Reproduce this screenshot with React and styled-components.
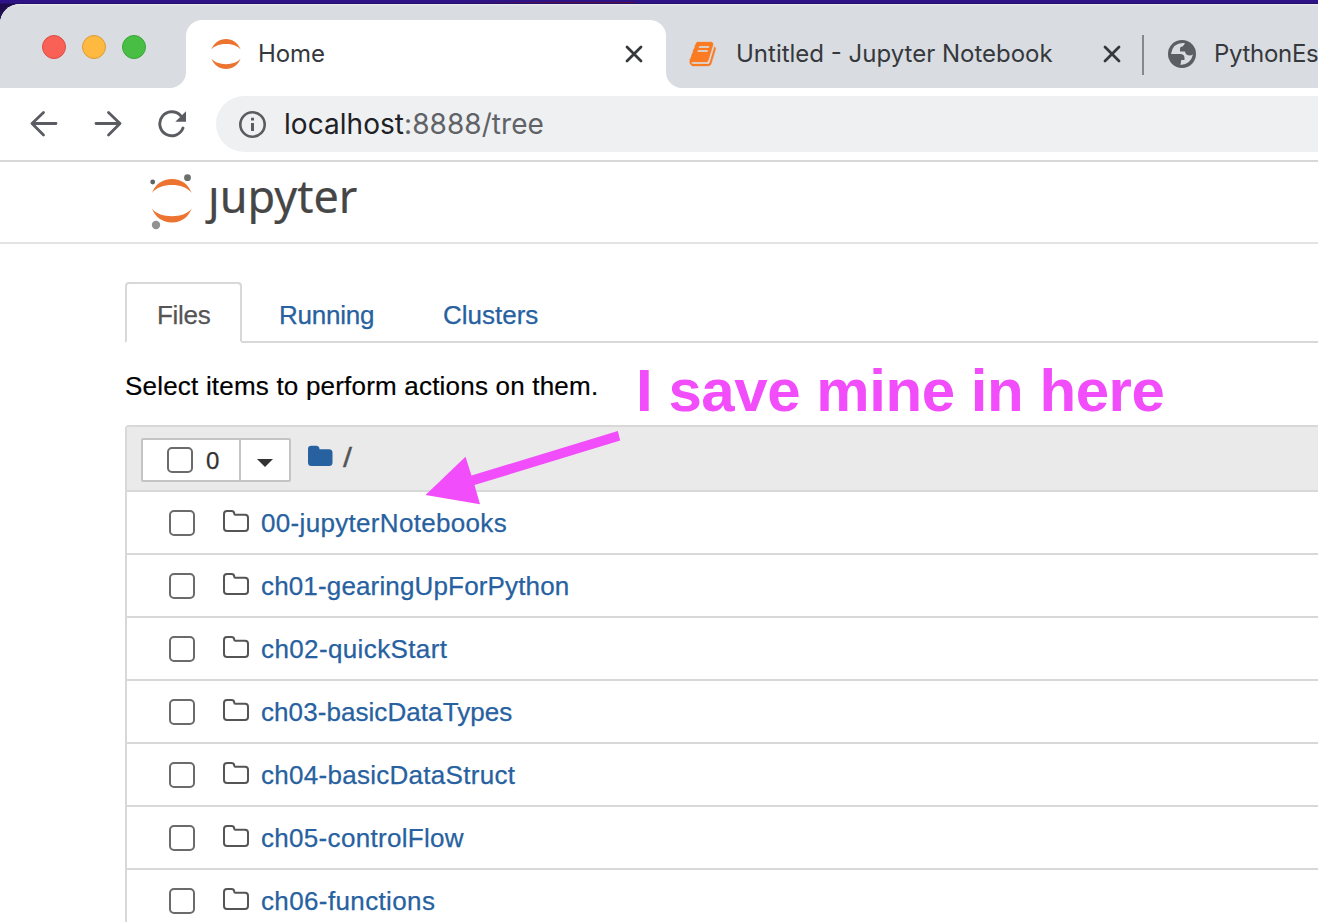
import React from "react";
import styled, { createGlobalStyle } from "styled-components";

const helvetica = '"Liberation Sans", Arial, sans-serif';
const ui = 'Inter, "Liberation Sans", sans-serif';

const GlobalStyle = createGlobalStyle`
  * { box-sizing: border-box; }
  html, body { margin: 0; padding: 0; overflow: hidden; }
  svg { flex: none; }
`;

const Desktop = styled.div`
  position: relative;
  width: 1318px;
  height: 922px;
  padding-top: 4px;
  overflow: hidden;
  background:
    linear-gradient(90deg, transparent 460px, #5a0d45 560px 634px, transparent 636px) 0 2px / 100% 1px no-repeat,
    linear-gradient(#2d1385 0 3px, #1c0b4e 4px, #2b1352 30px);
`;

const Window = styled.div`
  height: 918px;
  display: flex;
  flex-direction: column;
  background: #fff;
  border-top-left-radius: 20px;
  overflow: hidden;
`;

const TabStrip = styled.div`
  height: 84px;
  flex: none;
  display: flex;
`;

const LeftShoulder = styled.div`
  flex: none;
  background: linear-gradient(#d9dce1 50%, #fff 50%);
`;

const WindowControls = styled.div`
  width: 186px;
  height: 84px;
  display: flex;
  gap: 16px;
  padding: 31px 0 0 42px;
  border-bottom-right-radius: 16px;
  background: linear-gradient(#eceef0 0, #d9dce1 2px);
`;

const Light = styled.span`
  width: 24px;
  height: 24px;
  border-radius: 50%;
  background: ${(p) => p.$fill};
  border: 1px solid ${(p) => p.$edge};
`;

const ActiveTabSlot = styled.div`
  width: 480px;
  height: 84px;
  flex: none;
  padding-top: 16px;
  background: linear-gradient(#eceef0 0, #d9dce1 2px);
`;

const ActiveTab = styled.div`
  height: 68px;
  display: flex;
  align-items: center;
  padding: 0 24px;
  border-radius: 16px 16px 0 0;
  background: #fff;
`;

const RightShoulder = styled.div`
  flex: 1;
  min-width: 0;
  background: linear-gradient(#d9dce1 50%, #fff 50%);
`;

const IdleTabs = styled.div`
  height: 84px;
  display: flex;
  align-items: center;
  padding: 16px 0 0 23px;
  border-bottom-left-radius: 16px;
  background: linear-gradient(#eceef0 0, #d9dce1 2px);
  overflow: hidden;
`;

const TabTitle = styled.span`
  font: 24px/32px ${ui};
  letter-spacing: ${(p) => p.$track}px;
  color: #35383c;
  white-space: nowrap;
  width: ${(p) => (p.$width ? p.$width + "px" : "auto")};
  margin: 0 0 0 ${(p) => p.$gap}px;
  flex: none;
`;

const TabDivider = styled.span`
  width: 2px;
  height: 40px;
  margin: 1px 24px 0 21px;
  background: #85888c;
  flex: none;
`;

const Toolbar = styled.div`
  height: 74px;
  flex: none;
  display: flex;
  align-items: center;
  border-bottom: 2px solid #d7d8d9;
  padding-left: 30px;
`;

const NavButtons = styled.div`
  width: 186px;
  display: flex;
  align-items: center;
  gap: 36px;
`;

const AddressBar = styled.div`
  flex: 1;
  height: 56px;
  display: flex;
  align-items: center;
  gap: 18px;
  padding-left: 23px;
  border-radius: 28px 0 0 28px;
  background: #eff0f2;
`;

const Url = styled.span`
  font: 28px/36px ${ui};
  letter-spacing: ${(p) => p.$track}px;
  color: #5f6266;
  b { font-weight: 400; color: #202124; }
`;

const Header = styled.header`
  height: 82px;
  flex: none;
  display: flex;
  align-items: flex-start;
  padding: 12px 0 0 149px;
  border-bottom: 2px solid #e3e3e3;
`;

const Wordmark = styled.span`
  font: 45px/50px "Noto Sans", "Open Sans", sans-serif;
  -webkit-text-stroke: 0.2px #464646;
  color: #464646;
  margin: -3px 0 0 15px;
`;

const DotlessJ = styled.span`
  display: inline-block;
  clip-path: inset(17px -10px -10px -10px);
`;

const Main = styled.main`
  padding: 38px 0 0 125px;
`;

const NavTabs = styled.nav`
  display: flex;
  height: 61px;
  border-bottom: 2px solid #d8d8d8;
`;

const NavTab = styled.a`
  height: 61px;
  width: ${(p) => p.$width}px;
  padding: 15px 0 0 30px;
  font: 26px/32px ${helvetica};
  letter-spacing: ${(p) => p.$track || 0}px;
  color: ${(p) => (p.$active ? "#555" : "#2761a0")};
  -webkit-text-stroke: 0.25px currentColor;
  border: 2px solid ${(p) => (p.$active ? "#d8d8d8" : "transparent")};
  border-bottom: ${(p) => (p.$active ? "2px solid #fff" : "0")};
  border-radius: 4px 4px 0 0;
  margin-right: 5px;
`;

const Hint = styled.p`
  margin: 27px 0 23px;
  font: 26px/32px ${helvetica};
  letter-spacing: ${(p) => p.$track}px;
  color: #000;
  -webkit-text-stroke: 0.2px currentColor;
  white-space: nowrap;
`;

const FileList = styled.section`
  border: 2px solid #d8d8d8;
  border-width: 2px 0 0 2px;
  border-top-left-radius: 4px;
`;

const ListHeader = styled.div`
  height: 65px;
  display: flex;
  background: #eaeaea;
  border-bottom: 2px solid #d8d8d8;
  padding: 11px 0 0 14px;
`;

const ButtonGroup = styled.div`
  display: flex;
  width: 150px;
  height: 44px;
  background: #fff;
  border: 2px solid #c4c4c4;
  border-radius: 2px;
`;

const SelectAll = styled.div`
  width: 98px;
  display: flex;
  align-items: center;
  gap: 13px;
  padding-left: 24px;
  border-right: 2px solid #c4c4c4;
  font: 24px/32px ${helvetica};
  color: #333;
  -webkit-text-stroke: 0.25px currentColor;
`;

const Count = styled.span`
  padding-top: 2px;
`;

const MenuToggle = styled.div`
  flex: 1;
  display: flex;
  align-items: center;
  justify-content: center;
  padding-top: 5px;
`;

const Checkbox = styled.span`
  width: 26px;
  height: 26px;
  flex: none;
  border: 2px solid #6b6b6b;
  border-radius: 5px;
  background: #fff;
`;

const Breadcrumb = styled.div`
  display: flex;
  gap: 10px;
  padding: 7px 0 0 17px;
  font: 26px/26px ${helvetica};
  color: #555;
`;

const Slash = styled.span`
  font-size: 27px;
  -webkit-text-stroke: 0.3px #555;
  transform: scaleX(1.2);
  transform-origin: left;
`;

const Row = styled.div`
  height: 63px;
  display: flex;
  align-items: center;
  padding: 1px 0 0 42px;
  border-bottom: 2px solid #d8d8d8;
`;

const FileName = styled.a`
  margin-left: 12px;
  font: 26px/32px ${helvetica};
  letter-spacing: ${(p) => p.$track}px;
  color: #2761a0;
  -webkit-text-stroke: 0.25px currentColor;
  white-space: nowrap;
`;

const FolderSvg = styled.svg`
  width: 26px;
  height: 22px;
  margin: -4px 0 0 28px;
  flex: none;
`;

const Note = styled.div`
  position: absolute;
  left: 636px;
  top: 357px;
  font: bold 60px/68px ${helvetica};
  letter-spacing: ${(p) => p.$track}px;
  color: #f24dfa;
  white-space: nowrap;
`;

const Arrow = styled.svg`
  position: absolute;
  left: 420px;
  top: 425px;
`;

const CloseIcon = () => (
  <svg width="18" height="18" viewBox="0 0 18 18" stroke="#35383c" strokeWidth="2.8" strokeLinecap="round">
    <path d="M2 2L16 16M16 2L2 16" />
  </svg>
);

const JupyterFavicon = () => (
  <svg width="32" height="32" viewBox="0 0 32 32" fill="#ec7430">
    <path d="M1.300 11.500C4 5 9.500 1 16 1s12 4 14.700 10.500C27.500 7.800 22 6 16 6S4.500 7.800 1.300 11.500Z" />
    <path d="M1.300 20.500C4.500 24.200 10 26.200 16 26.200s11.500-2 14.700-5.700C28 27 22.500 31 16 31S4 27 1.300 20.500Z" />
  </svg>
);

const BookIcon = () => (
  <svg width="28" height="28" viewBox="-40 0 1792 1792" fill="#fb7b23" stroke="#fb7b23" strokeWidth="20">
    <path d="M1639 478q40 57 18 129l-275 906q-19 64-76.5 107.500t-122.500 43.500h-923q-77 0-148.500-53.500t-99.500-131.500q-24-67-2-127 0-4 3-27t4-37q1-8-3-21.500t-3-19.500q2-11 8-21t16.500-23.500 16.500-23.500q23-38 45-91.500t30-91.500q3-10 .5-30t-.5-28q3-11 17-28t17-23q21-36 42-92t25-90q1-9-2.500-32t.5-28q4-13 22-30.500t22-22.500q19-26 42.500-84.500t27.500-96.500q1-8-3-25.500t-2-26.500q2-8 9-18t18-23 17-21q8-12 16.500-30.500t15-35 16-36 19.500-32 26.500-23.500 36-11.500 47.500 5.500l-1 3q38-9 51-9h761q74 0 114 56t18 130l-274 906q-36 119-71.500 153.500t-128.500 34.500h-869q-27 0-38 15-11 16-1 43 24 70 144 70h923q29 0 56-15.500t35-41.500l300-987q7-22 5-57 38 15 59 43zm-1064 2q-4 13 2 22.500t20 9.500h608q13 0 25.500-9.500t16.500-22.500l21-64q4-13-2-22.500t-20-9.500h-608q-13 0-25.500 9.500t-16.500 22.500zm-83 256q-4 13 2 22.500t20 9.500h608q13 0 25.500-9.500t16.500-22.500l21-64q4-13-2-22.500t-20-9.500h-608q-13 0-25.500 9.500t-16.500 22.500z" />
  </svg>
);

const GlobeIcon = () => (
  <svg width="28" height="28" viewBox="0 0 28 28">
    <circle cx="14" cy="14" r="14" fill="#5b5e62" />
    <path fill="#d9dce1" d="M3 14H13Q16.500 14.500 16.500 18V20H13.200L12.500 25Q22.500 24.500 25 14.500Q21.500 16.500 18.500 14.500Q17.200 13.300 17 11.500H12V8.500Q12 6.700 14.500 6.500Q15.500 6 17 3.200Q5 2 3 14Z" />
  </svg>
);

const ChromeArrow = ({ flip }) => (
  <svg width="28" height="28" viewBox="0 0 28 28" fill="none" stroke="#5a5c61" strokeWidth="2.800" strokeLinecap="round" strokeLinejoin="round">
    <path d={flip ? "M2 13.500H26M14.500 2.500L26 13.500L14.500 25" : "M26 13.500H2M13.500 2.500L2 13.500L13.500 25"} />
  </svg>
);

const ReloadIcon = () => (
  <svg width="28" height="28" viewBox="0 0 28 28">
    <path d="M25 18A12 12 0 1 1 22.500 5.500" fill="none" stroke="#5a5c61" strokeWidth="2.900" strokeLinecap="round" />
    <path d="M28 1.200V11.800H17.300Z" fill="#5a5c61" />
  </svg>
);

const InfoIcon = () => (
  <svg width="27" height="27" viewBox="0 0 27 27">
    <circle cx="13.500" cy="13.500" r="12.200" fill="none" stroke="#5a5c61" strokeWidth="2.600" />
    <path d="M12 6.800h3v2.800h-3zM12 12h3v8h-3z" fill="#5a5c61" />
  </svg>
);

const JupyterLogo = () => (
  <svg width="44" height="56" viewBox="0 0 44 56">
    <g fill="#ec7430">
      <path d="M3 19C6 10.500 13.500 5 23 5s16.500 5.500 19.700 14C38.500 13.500 31 11 23 11S7 13.500 3 19Z" />
      <path d="M3 34.500C7 40 15 42.200 23 42.200s15.500-2.200 19.700-7.700C39.500 43 32.500 48.500 23 48.500S6 43 3 34.500Z" />
    </g>
    <circle cx="3.700" cy="8" r="2.400" fill="#616262" />
    <circle cx="38.500" cy="3.700" r="3.400" fill="#6d6e6e" />
    <circle cx="7" cy="51" r="4.200" fill="#929292" />
  </svg>
);

const FolderOutline = () => (
  <FolderSvg viewBox="0 0 26 22">
    <path d="M1 4Q1 1 4 1H8.500Q11.300 1 11.300 4Q11.300 4.800 12.300 4.800H22Q25 4.800 25 7.800V18Q25 21 22 21H4Q1 21 1 18Z" fill="none" stroke="#555" strokeWidth="2" />
  </FolderSvg>
);

const FolderSolid = () => (
  <svg width="25" height="21" viewBox="0 0 25 21">
    <path d="M0 4Q0 .8 3.500 .8H8Q11.500 .8 11.500 4.300H21Q24.500 4.300 24.500 7.800V17.500Q24.500 21 21 21H3.500Q0 21 0 17.500Z" fill="#2761a0" />
  </svg>
);

const folders = [
  ["00-jupyterNotebooks", 0.32],
  ["ch01-gearingUpForPython", 0.15],
  ["ch02-quickStart", 0.38],
  ["ch03-basicDataTypes", 0.07],
  ["ch04-basicDataStruct", 0.28],
  ["ch05-controlFlow", 0.31],
  ["ch06-functions", 0.37],
];

export default function App() {
  return (
    <Desktop>
      <GlobalStyle />
      <Window>
        <TabStrip>
          <LeftShoulder>
            <WindowControls>
              <Light $fill="#f96156" $edge="#dc4c43" />
              <Light $fill="#fdb940" $edge="#dc9c34" />
              <Light $fill="#48bf44" $edge="#3ba438" />
            </WindowControls>
          </LeftShoulder>
          <ActiveTabSlot>
            <ActiveTab>
              <JupyterFavicon />
              <TabTitle $gap={16} $width={367} $track={-0.1}>Home</TabTitle>
              <CloseIcon />
            </ActiveTab>
          </ActiveTabSlot>
          <RightShoulder>
            <IdleTabs>
              <BookIcon />
              <TabTitle $gap={19} $width={367} $track={0}>Untitled - Jupyter Notebook</TabTitle>
              <CloseIcon />
              <TabDivider />
              <GlobeIcon />
              <TabTitle $gap={18} $track={-0.3}>PythonEs</TabTitle>
            </IdleTabs>
          </RightShoulder>
        </TabStrip>
        <Toolbar>
          <NavButtons>
            <ChromeArrow />
            <ChromeArrow flip />
            <ReloadIcon />
          </NavButtons>
          <AddressBar>
            <InfoIcon />
            <Url $track={0.05}><b>localhost</b>:8888/tree</Url>
          </AddressBar>
        </Toolbar>
        <Header>
          <JupyterLogo />
          <Wordmark><DotlessJ>j</DotlessJ>upyter</Wordmark>
        </Header>
        <Main>
          <NavTabs>
            <NavTab $active $width={117} $track={-0.3}>Files</NavTab>
            <NavTab $width={159} $track={-0.25}>Running</NavTab>
            <NavTab $width={160}>Clusters</NavTab>
          </NavTabs>
          <Hint $track={0.2}>Select items to perform actions on them.</Hint>
          <FileList>
            <ListHeader>
              <ButtonGroup>
                <SelectAll><Checkbox /><Count>0</Count></SelectAll>
                <MenuToggle>
                  <svg width="16" height="8" viewBox="0 0 16 8"><path d="M0 0H16L8 8Z" fill="#333" /></svg>
                </MenuToggle>
              </ButtonGroup>
              <Breadcrumb><FolderSolid /><Slash>/</Slash></Breadcrumb>
            </ListHeader>
            {folders.map(([name, track]) => (
              <Row key={name}>
                <Checkbox />
                <FolderOutline />
                <FileName $track={track}>{name}</FileName>
              </Row>
            ))}
          </FileList>
        </Main>
      </Window>
      <Note $track={-0.45}>I save mine in here</Note>
      <Arrow width="205" height="85" viewBox="420 425 205 85">
        <path d="M617.800 431L620.200 440.500L474.500 485L480 504.200L425.500 495L465.500 456.800L471.500 475.500Z" fill="#f24dfa" />
      </Arrow>
    </Desktop>
  );
}
